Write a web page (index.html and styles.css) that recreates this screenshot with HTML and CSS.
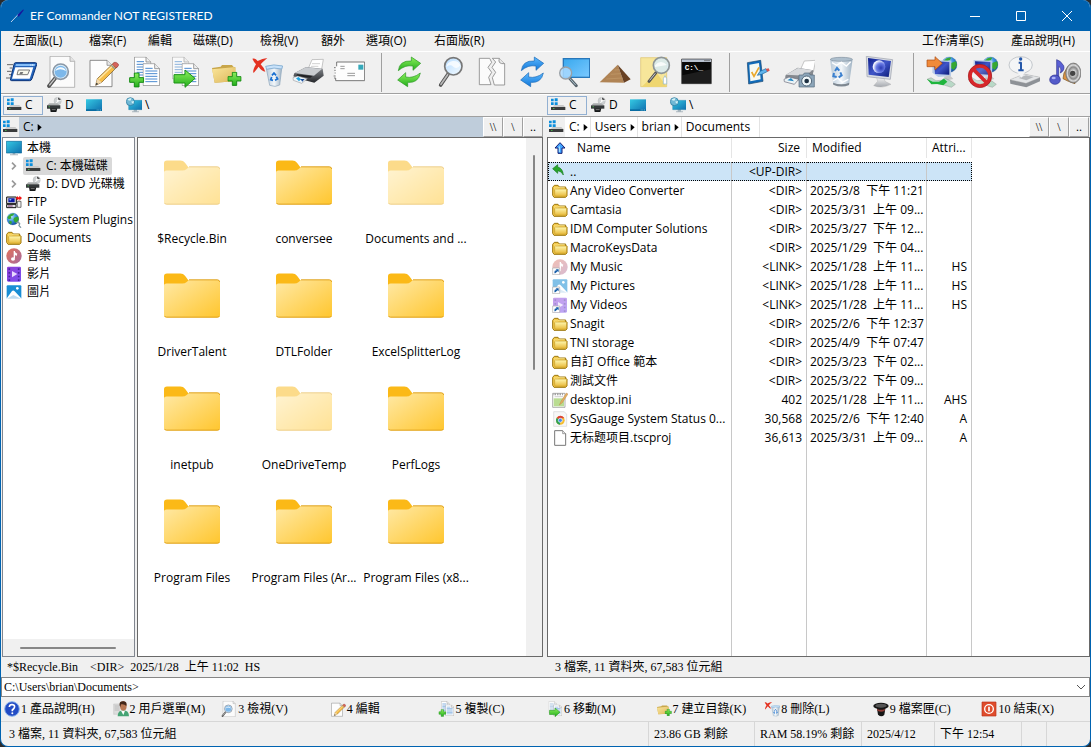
FILE: index.html
```html
<!DOCTYPE html>
<html lang="zh-Hant">
<head>
<meta charset="utf-8">
<title>EF Commander NOT REGISTERED</title>
<link rel="stylesheet" href="styles.css">
</head>
<body>
<svg class="sprite" aria-hidden="true">
<defs>
<linearGradient id="gFolder" x1="0" y1="0" x2="1" y2="1"><stop offset="0" stop-color="#ffe9a6"/><stop offset="1" stop-color="#ffc62e"/></linearGradient>
<linearGradient id="gGold" x1="0" y1="0" x2="0" y2="1"><stop offset="0" stop-color="#fff8b0"/><stop offset="1" stop-color="#e8b93a"/></linearGradient>
<linearGradient id="gPaleFolder" x1="0" y1="0" x2="1" y2="1"><stop offset="0" stop-color="#fbe69a"/><stop offset="1" stop-color="#dcb65c"/></linearGradient>
<linearGradient id="gScreen" x1="0" y1="0" x2="1" y2="1"><stop offset="0" stop-color="#35c9e3"/><stop offset="1" stop-color="#0f6fae"/></linearGradient>
<linearGradient id="gBlue" x1="0" y1="0" x2="1" y2="1"><stop offset="0" stop-color="#3aa9ee"/><stop offset="1" stop-color="#79c8ff"/></linearGradient>
<linearGradient id="gNavy" x1="0" y1="0" x2="1" y2="1"><stop offset="0" stop-color="#10208c"/><stop offset=".5" stop-color="#3f55c8"/><stop offset="1" stop-color="#0c1a78"/></linearGradient>
<linearGradient id="gGreen" x1="0" y1="0" x2="0" y2="1"><stop offset="0" stop-color="#8df05c"/><stop offset="1" stop-color="#22ad1c"/></linearGradient>
<linearGradient id="gArrowBlue" x1="0" y1="0" x2="0" y2="1"><stop offset="0" stop-color="#5ab8ff"/><stop offset="1" stop-color="#1377d8"/></linearGradient>
<linearGradient id="gSilver" x1="0" y1="0" x2="0" y2="1"><stop offset="0" stop-color="#fafafa"/><stop offset="1" stop-color="#a4a8ae"/></linearGradient>
<linearGradient id="gDark" x1="0" y1="0" x2="0" y2="1"><stop offset="0" stop-color="#8a8d92"/><stop offset="1" stop-color="#25272b"/></linearGradient>
<linearGradient id="gGlass" x1="0" y1="0" x2="1" y2="1"><stop offset="0" stop-color="#b7dcff"/><stop offset="1" stop-color="#f4fbff"/></linearGradient>
<linearGradient id="gBin" x1="0" y1="0" x2="1" y2="0"><stop offset="0" stop-color="#b9c9d8"/><stop offset=".5" stop-color="#f1f6fa"/><stop offset="1" stop-color="#9fb2c3"/></linearGradient>
<linearGradient id="gMusic" x1="0" y1="0" x2="1" y2="1"><stop offset="0" stop-color="#e2735a"/><stop offset="1" stop-color="#a86a9c"/></linearGradient>
<linearGradient id="gVideo" x1="0" y1="0" x2="1" y2="1"><stop offset="0" stop-color="#8f3fd6"/><stop offset="1" stop-color="#7a4ff0"/></linearGradient>
<radialGradient id="gGlobe" cx=".35" cy=".3" r=".8"><stop offset="0" stop-color="#c4ecff"/><stop offset=".5" stop-color="#3a8fdc"/><stop offset="1" stop-color="#0b3f92"/></radialGradient>
<radialGradient id="gMoon" cx=".65" cy=".6" r=".6"><stop offset="0" stop-color="#2a3bb4"/><stop offset=".6" stop-color="#6c7de6"/><stop offset="1" stop-color="#f4f6ff"/></radialGradient>
<radialGradient id="gCone"><stop offset="0" stop-color="#555"/><stop offset=".25" stop-color="#d8d8d8"/><stop offset=".6" stop-color="#888"/><stop offset=".8" stop-color="#ddd"/><stop offset="1" stop-color="#777"/></radialGradient>
</defs>

<symbol id="textpage" viewBox="0 0 52 68"><path d="M1 1H36L51 16V67H1Z" fill="#fff" stroke="#8a8a8a" stroke-width="2.5"/><path d="M36 1V16H51" fill="#eee" stroke="#8a8a8a" stroke-width="2.5"/><path d="M8 15H30M8 23H44M8 31H44M8 39H44M8 47H44M8 55H44" stroke="#4a8ad0" stroke-width="3"/></symbol>
<symbol id="plus" viewBox="0 0 46 46"><path d="M16 2H30V16H44V30H30V44H16V30H2V16H16Z" fill="url(#gGreen)" stroke="#158a14" stroke-width="3"/></symbol>
<symbol id="lens" viewBox="0 0 76 94"><path d="M30 54L8 86" stroke="#555" stroke-width="11" stroke-linecap="round"/><path d="M29 55L9 84" stroke="#b9b9b9" stroke-width="5" stroke-linecap="round"/><circle cx="46" cy="30" r="26" fill="url(#gGlass)" stroke="#777" stroke-width="5"/><path d="M25 33Q35 22 46 31T67 27A22 22 0 0 0 25 33Z" fill="#fff" opacity=".75"/></symbol>
<symbol id="globe" viewBox="0 0 50 50"><circle cx="25" cy="25" r="23" fill="url(#gGlobe)" stroke="#3069a0" stroke-width="1"/><path d="M8 13Q18 2 31 4L26 12L17 15L20 23L9 26L4 19ZM30 20L45 15L48 26L39 41L31 36L27 27ZM12 31L22 36L18 46L11 39Z" fill="#36a832"/></symbol>

<symbol id="run" viewBox="0 0 96 96"><path d="M6 26H24M14 36H22M6 46H20M12 56H18M3 66H16" stroke="#666" stroke-width="3"/><path d="M31 20H91Q97 20 95 26L81 68Q79 74 74 74H20Q14 74 17 67L27 25Q28 20 31 20Z" fill="#2564bb" stroke="#0b3479" stroke-width="3"/><path d="M33 24H91L89 30H31Z" fill="#85bdf7"/><path d="M31 34H85L74 68H21Z" fill="#fff"/><path d="M40 42H74L68 56H36Z" fill="#f8f8ec" stroke="#777" stroke-width="3"/><path d="M46 48H55L52 54H43Z" fill="#777"/><path d="M76 27H87" stroke="#fff" stroke-width="3" stroke-dasharray="3 2"/></symbol>
<symbol id="view" viewBox="0 0 96 96"><path d="M12 1H72L86 16V94H12Z" fill="#fbfbfb" stroke="#999" stroke-width="2"/><path d="M72 1V16H86" fill="#e4e4e4" stroke="#999" stroke-width="2"/><path d="M28 66L9 90" stroke="#555" stroke-width="11" stroke-linecap="round"/><path d="M27 67L10 88" stroke="#ccc" stroke-width="4"/><circle cx="44" cy="47" r="23" fill="#dceffc" stroke="#8b98a6" stroke-width="5"/><circle cx="44" cy="47" r="18" fill="#7db8ea"/><path d="M28 45Q42 34 60 45A17 17 0 0 0 28 45Z" fill="#f5fbff"/></symbol>
<symbol id="edit" viewBox="0 0 96 96"><path d="M9 13H60L75 28V92H9Z" fill="#fdfdfd" stroke="#777" stroke-width="2.5"/><path d="M60 13V28H75" fill="#e8e8e8" stroke="#777" stroke-width="2"/><path d="M26 88L31 68L80 21L91 32L44 79Z" fill="#f6bd48" stroke="#70501c" stroke-width="2"/><path d="M35 70L82 25" stroke="#ffe7a5" stroke-width="4"/><path d="M31 68L44 79L26 88Z" fill="#f1d8ac"/><path d="M28 80L34 84L26 88Z" fill="#333"/><path d="M76 25L82 19Q88 17 94 24Q96 29 92 32L87 36Z" fill="#d6635b" stroke="#833" stroke-width="1.5"/><path d="M73 28L84 39" stroke="#8f9498" stroke-width="4"/></symbol>
<symbol id="copy" viewBox="0 0 96 96"><use href="#textpage" x="18" y="2" width="52" height="68"/><use href="#textpage" x="44" y="22" width="52" height="68"/><use href="#plus" x="3" y="49" width="46" height="46"/></symbol>
<symbol id="move" viewBox="0 0 96 96"><g opacity=".6"><use href="#textpage" x="9" y="2" width="52" height="68"/></g><use href="#textpage" x="38" y="22" width="52" height="68"/><path d="M15 56H48V42L78 67L48 94V81H15Z" fill="url(#gGreen)" stroke="#1c9317" stroke-width="3"/></symbol>
<symbol id="mkdir" viewBox="0 0 96 96"><path d="M6 36L32 32L36 27L66 27L70 32L76 34V76L14 80Z" fill="#c8a64a"/><path d="M6 40L70 34L78 75L14 80Z" fill="url(#gPaleFolder)"/><path d="M68 34L76 34L78 75L72 78Z" fill="#e9cb75"/><use href="#plus" x="52" y="47" width="43" height="43"/></symbol>
<symbol id="delete" viewBox="0 0 96 96"><path d="M46 38L93 30L86 87Q74 95 56 88Z" fill="url(#gBin)" stroke="#8aa3ba" stroke-width="2"/><path d="M44 31Q68 23 95 30L92 39Q69 33 47 40Z" fill="#c8e2fa" stroke="#8db4d6" stroke-width="3"/><path d="M63 58L69 51L75 58M62 63L59 71L66 73M76 62L80 69L72 73" fill="none" stroke="#176ed0" stroke-width="5"/><path d="M4 8Q13 5 20 15Q34 8 49 6Q35 18 29 25Q39 35 43 47Q32 46 23 32Q16 41 8 51Q3 46 15 25Q8 17 4 8Z" fill="#e43222"/></symbol>
<symbol id="print" viewBox="0 0 96 96"><path d="M60 11L94 10L88 45L46 44Z" fill="#fff" stroke="#aaa" stroke-width="2"/><path d="M60 23H84M57 31H79" stroke="#bbb" stroke-width="2"/><path d="M7 52L42 33L92 38L95 59L67 80L22 68L4 61Z" fill="url(#gDark)"/><path d="M8 51L42 34L90 39L66 59Z" fill="#c9ccd0"/><path d="M15 55L61 60L55 65L13 61Z" fill="#202124"/><path d="M3 65L17 60L46 68L29 82L4 73Z" fill="#eef5fb" stroke="#888" stroke-width="1.5"/><path d="M12 67L20 63L27 70L21 76Z" fill="#22a5df"/><path d="M25 69L38 69L31 77Z" fill="#1b4f9e"/></symbol>
<symbol id="mail" viewBox="0 0 96 96"><path d="M11 18H95V74H8V66H3M8 60H2M8 51H5M8 43H4M8 35H3M11 18V31" fill="#fdfdfd" stroke="#777" stroke-width="3"/><path d="M76 26H91V41H76Z" fill="#36a9ba"/><path d="M22 31H35M22 38H35M43 52H66M43 59H66" stroke="#999" stroke-width="3"/></symbol>
<symbol id="cycle" viewBox="0 0 96 96"><path d="M13 44Q16 13 52 15V3L80 22L57 43V30Q33 26 13 44Z"/><path d="M79 51Q73 82 41 79V92L11 72L35 50V63Q57 68 79 51Z"/></symbol>
<symbol id="search" viewBox="0 0 96 96"><use href="#lens" x="9" y="1" width="76" height="94"/></symbol>
<symbol id="split" viewBox="0 0 96 96"><path d="M10 7H41L47 19L36 34L47 49L38 64L45 86H10Z" fill="#fbfbfb" stroke="#888" stroke-width="2.5"/><path d="M49 7H70L86 23V87H55L49 65L59 49L48 34L59 18Z" fill="#fbfbfb" stroke="#888" stroke-width="2.5"/><path d="M70 7Q64 25 86 23" fill="#e6e6e6" stroke="#888" stroke-width="2.5"/></symbol>
<symbol id="scan" viewBox="0 0 96 96"><path d="M14 6H97V66H14Z" fill="#2877ba"/><path d="M18 10H93V62H18Z" fill="url(#gBlue)"/><path d="M34 66L55 89" stroke="#58646c" stroke-width="9" stroke-linecap="round"/><path d="M35 67L53 87" stroke="#a7bdc8" stroke-width="3"/><circle cx="23" cy="51" r="18" fill="#a9d9ff" fill-opacity=".85" stroke="#999fa5" stroke-width="4"/></symbol>
<symbol id="pyramid" viewBox="0 0 96 96"><path d="M2 79L56 26L75 80Z" fill="#b08455"/><path d="M56 26L95 70L75 80Z" fill="#684124"/><path d="M22 69L70 66M35 55L65 53M47 42L61 41" stroke="#c39b6b" stroke-width="2"/></symbol>
<symbol id="findnote" viewBox="0 0 96 96"><path d="M2 5H80V92H2Z" fill="#f7e69a" stroke="#dcc36a" stroke-width="2"/><path d="M5 92L50 50L80 92Z" fill="#efd670"/><path d="M70 68L75 59L80 68V84H70Z" fill="#fff" stroke="#8bb5cf" stroke-width="2"/><path d="M48 50L27 76" stroke="#555" stroke-width="9" stroke-linecap="round"/><path d="M46 52L29 73" stroke="#ccc" stroke-width="3"/><circle cx="64" cy="28" r="24" fill="#d8eaf0" fill-opacity=".9" stroke="#8f9697" stroke-width="5"/><path d="M45 28Q62 8 81 27L45 33Z" fill="#fff" opacity=".8"/></symbol>
<symbol id="options" viewBox="0 0 96 96"><path d="M16 20L56 13L63 76L20 84Z" fill="#116bb9" stroke="#17466f" stroke-width="2"/><path d="M22 26L51 21L56 70L25 76Z" fill="#f6f9f3"/><path d="M29 48L36 61L51 34" fill="none" stroke="#e9a829" stroke-width="5"/><path d="M46 58L54 46L72 38L77 46L59 55Z" fill="#62b4ec" stroke="#17639b" stroke-width="2"/><path d="M71 39L80 37L83 44L76 47Z" fill="#d9534f"/></symbol>
<symbol id="camera" viewBox="0 0 96 96"><path d="M64 15L98 13L91 48L50 46Z" fill="#fff" stroke="#aaa" stroke-width="2"/><path d="M8 57L44 35L91 43L88 74H51L19 68L6 65Z" fill="#85898f"/><path d="M9 56L45 36L88 43L67 59Z" fill="#d7d9dc"/><path d="M3 70L18 63L47 70L34 85L4 77Z" fill="#edf4f6" stroke="#667" stroke-width="2"/><path d="M13 73L24 66L33 76Z" fill="#2689c5"/><path d="M48 57H60L64 51H78L82 57H94V93H48Z" fill="#8da6ba" stroke="#536779" stroke-width="2"/><circle cx="71" cy="75" r="15" fill="#eff7fa" stroke="#536779" stroke-width="3"/><circle cx="71" cy="75" r="7" fill="#1d3041"/></symbol>
<symbol id="bin" viewBox="0 0 96 96"><path d="M18 10L86 9L75 87Q52 97 28 86Z" fill="url(#gBin)"/><ellipse cx="52" cy="10" rx="33" ry="6" fill="#aebfcd" stroke="#7e909f" stroke-width="2"/><path d="M24 20L38 28L52 19L67 30L80 17M27 75L42 66L55 79L73 70" fill="none" stroke="#fff" stroke-width="4"/><path d="M33 45L39 36L46 44M30 51L28 61L38 63M49 49L53 58L44 64" fill="none" stroke="#3b80cf" stroke-width="6"/><path d="M28 86Q52 97 75 87L76 80Q52 89 27 80Z" fill="#7e8790"/></symbol>
<symbol id="screensaver" viewBox="0 0 96 96"><path d="M34 62H56L60 76L78 85Q52 99 26 89L38 76Z" fill="url(#gSilver)" stroke="#a8a8a8"/><path d="M4 1L83 11L76 70L6 62Z" fill="#d8dce3" stroke="#9a9fab" stroke-width="2"/><path d="M9 6L78 15L71 63L11 56Z" fill="url(#gNavy)"/><circle cx="42" cy="32" r="19" fill="url(#gMoon)"/></symbol>
<symbol id="netscreen" viewBox="0 0 96 96"><use href="#globe" x="45" y="1" width="50" height="50"/><path d="M20 12L76 14L75 60L37 63L19 50Z" fill="#b9cce8"/><path d="M24 16L70 18V56L27 54Z" fill="url(#gNavy)"/><path d="M53 62L71 58L82 69L65 73Z" fill="#c8c8c8"/><path d="M3 70L15 65L30 74L46 73L56 66L76 76L88 85L76 94L57 88L42 84L21 82Z" fill="#b9d9c7" stroke="#777" stroke-width="1"/></symbol>
<symbol id="connect" viewBox="0 0 96 96"><use href="#netscreen" width="96" height="96"/><path d="M3 69L20 77H39L54 68L64 77L52 88L34 84L16 85" fill="#1eb53d"/><path d="M3 12H27V2L49 22L27 42V32H3Z" fill="#f08a39" stroke="#a74813" stroke-width="2"/></symbol>
<symbol id="disconnect" viewBox="0 0 96 96"><use href="#netscreen" width="96" height="96"/><circle cx="39" cy="60" r="30" fill="#fff" fill-opacity=".15" stroke="#d7272a" stroke-width="11"/><path d="M18 39L60 81" stroke="#d7272a" stroke-width="11"/><circle cx="39" cy="60" r="35" fill="none" stroke="#8e1518" stroke-width="1.5"/></symbol>
<symbol id="driveinfo" viewBox="0 0 96 96"><path d="M6 72L48 54L97 64V75L55 94L7 83Z" fill="#8d9196"/><path d="M6 71L48 54L97 64L54 82Z" fill="#e4e6e8" stroke="#aaa"/><path d="M32 66L54 58L77 63L55 73Z" fill="#b5b8bb"/><ellipse cx="38" cy="27" rx="35" ry="25" fill="#f4f5f6" stroke="#aab0b6" stroke-width="2"/><path d="M27 48L41 65L51 48Z" fill="#f4f5f6"/><path d="M39 19V43M32 20H40M31 43H47" stroke="#2457a9" stroke-width="6"/><circle cx="38" cy="9" r="5" fill="#2457a9"/></symbol>
<symbol id="sound" viewBox="0 0 96 96"><path d="M45 51L56 33L78 22V83L58 76L42 68Z" fill="#dc9342" stroke="#76501c" stroke-width="2"/><ellipse cx="73" cy="51" rx="23" ry="30" fill="url(#gCone)" stroke="#777" stroke-width="2"/><circle cx="71" cy="52" r="8" fill="#444"/><path d="M23 11Q34 13 44 29Q48 43 34 51Q39 36 29 31V68H23Z" fill="#5a60d4" stroke="#2c318e" stroke-width="2"/><ellipse cx="18" cy="71" rx="16" ry="14" fill="#545bc9" stroke="#2d3294" stroke-width="2"/><ellipse cx="14" cy="66" rx="6" ry="4" fill="#aeb4f5"/></symbol>

<symbol id="s-drive" viewBox="0 0 48 48"><path d="M3 5H11V13H3ZM14 4H23V13H14ZM3 16H11V24H3ZM14 16H23V25H14Z" fill="#0c8fdd"/><path d="M8 29L14 24H40L46 30Z" fill="#c8c8c8"/><path d="M3 30H46V39H3Z" fill="#3a3c3d"/><path d="M10 33H13V36H10Z" fill="#53e45b"/></symbol>
<symbol id="s-dvd" viewBox="0 0 48 48"><circle cx="35" cy="12" r="11" fill="#ccd0d2" stroke="#aaa"/><path d="M35 1L36 10L46 9M35 14L28 21" stroke="#fff" stroke-width="3"/><circle cx="35" cy="12" r="3" fill="#fff"/><path d="M4 25L10 19H34L42 25Z" fill="#aaadae"/><path d="M3 25H43V35H3Z" fill="#34383a"/><path d="M12 34H34L31 45H14Z" fill="#161819"/><path d="M17 38H29" stroke="#aaa" stroke-width="2"/><path d="M8 28H11V31H8Z" fill="#4ed655"/></symbol>
<symbol id="s-desktop" viewBox="0 0 48 48"><path d="M0 7H48V42H0Z" fill="url(#gScreen)"/><path d="M0 37H48V42H0Z" fill="#086ca2"/><path d="M32 39H46" stroke="#9edff5" stroke-width="2" stroke-dasharray="3 2"/></symbol>
<symbol id="s-network" viewBox="0 0 48 48"><path d="M23 36H33V43H39V46H18V43H23Z" fill="#aab6be"/><path d="M8 10H48V38H8Z" fill="url(#gScreen)" stroke="#0c72a1"/><circle cx="13" cy="14" r="12" fill="#70b8d5" stroke="#1d7198" stroke-width="2"/><path d="M4 9Q8 2 17 4L13 11ZM15 14L24 12L22 21Z" fill="#d7f4f7"/></symbol>
<symbol id="s-computer" viewBox="0 0 48 48"><path d="M20 38H28V43H36V46H12V43H20Z" fill="#aeb9c0"/><path d="M1 4H47V39H1Z" fill="url(#gScreen)" stroke="#0b6898" stroke-width="2"/></symbol>
<symbol id="s-ftp" viewBox="0 0 48 48"><path d="M2 9H31V29H2Z" fill="#ddd" stroke="#111" stroke-width="3"/><path d="M7 13H26V25H7Z" fill="#0c18a8"/><path d="M10 15H17L12 21Z" fill="#7ec7ff"/><path d="M2 31H30V41H2Z" fill="#e0dfe2" stroke="#111" stroke-width="3"/><path d="M6 36H20" stroke="#7c3878" stroke-width="3"/><path d="M34 22H45V40H34Z" fill="#eee" stroke="#333" stroke-width="2"/><path d="M29 12L36 6V10H40V5L48 12L40 20V15H37V20Z" fill="#ef1515"/></symbol>
<symbol id="s-plugins" viewBox="0 0 48 48"><use href="#globe" x="1" y="1" width="39" height="40"/><path d="M31 34L36 30L41 35L39 41L45 47" fill="none" stroke="#8199a6" stroke-width="4"/></symbol>
<symbol id="s-folder" viewBox="0 0 48 48"><path d="M2 13L7 7H18L22 12H41V18H45V39L41 43H6L2 37Z" fill="#f3c94c" stroke="#9c770f" stroke-width="3"/><path d="M10 18H44L43 40H11Q8 40 8 35V20Z" fill="url(#gGold)" stroke="#c49822" stroke-width="2"/><path d="M6 15H17L21 14H38" fill="none" stroke="#fff1a3" stroke-width="2"/></symbol>
<symbol id="s-music" viewBox="0 0 48 48"><circle cx="24" cy="24" r="23" fill="url(#gMusic)"/><path d="M25 9V31" stroke="#fff" stroke-width="4"/><ellipse cx="21" cy="33" rx="6" ry="5" fill="#fff"/><path d="M25 9Q29 16 34 17L31 25L25 18Z" fill="#fff"/></symbol>
<symbol id="s-video" viewBox="0 0 48 48"><rect x="3" y="2" width="42" height="45" rx="4" fill="url(#gVideo)"/><path d="M10 7V45M38 7V45" stroke="#4a249d" stroke-width="5" stroke-dasharray="5 6"/><path d="M18 15L34 24L18 34Z" fill="#e8d9ff"/></symbol>
<symbol id="s-picture" viewBox="0 0 48 48"><rect x="2" y="4" width="44" height="41" rx="3" fill="#198ed5"/><path d="M3 42L18 21Q22 17 26 22L45 42V45H3Z" fill="#fff"/><path d="M3 44L22 33L45 44Z" fill="#bedcf0"/><circle cx="34" cy="13" r="4" fill="#fff"/></symbol>
<symbol id="shortcut" viewBox="0 0 48 48"><path d="M2 27H23V47H2Z" fill="#fff" stroke="#aaa" stroke-width="2"/><path d="M7 43L8 35L14 34L11 31H20V40L17 37L10 43Z" fill="#155da8"/></symbol>
<symbol id="s-ini" viewBox="0 0 48 48"><path d="M2 4H39V46H2Z" fill="#fdfdfd" stroke="#888" stroke-width="2"/><path d="M5 19H36V43H5Z" fill="#b9dc91"/><path d="M5 7H35" stroke="#777" stroke-width="5" stroke-dasharray="2 3"/><path d="M8 14H33" stroke="#bbb" stroke-width="2"/><path d="M22 39L27 28L43 3L48 6L31 32Z" fill="#e4b060" stroke="#ad7440"/></symbol>
<symbol id="s-chrome" viewBox="0 0 48 48"><path d="M5 2H36L44 9V46H5Z" fill="#f7f7f7" stroke="#d5d5d5" stroke-width="2"/><circle cx="25" cy="28" r="13" fill="#f5bd2e"/><path d="M25 28L14 21A13 13 0 0 1 37 22H25Z" fill="#dc4437"/><path d="M25 28L24 41A13 13 0 0 1 14 21Z" fill="#2da154"/><circle cx="25" cy="28" r="6" fill="#4285f4" stroke="#fff" stroke-width="2"/></symbol>
<symbol id="s-blank" viewBox="0 0 48 48"><path d="M8 2H32L41 11V46H8Z" fill="#fff" stroke="#777" stroke-width="3"/><path d="M32 2V11H41" fill="#eee" stroke="#777" stroke-width="2"/></symbol>
<symbol id="s-up" viewBox="0 0 48 48"><path d="M24 8L39 24H30V40H18V24H9Z" fill="#43a4ff" stroke="#111d72" stroke-width="3"/><path d="M22 19V36" stroke="#b9edff" stroke-width="3"/></symbol>
<symbol id="s-back" viewBox="0 0 48 48"><path d="M2 14L17 2V9Q32 12 34 33Q28 21 17 20V28Z" fill="#28a62a" stroke="#14791b" stroke-width="2"/></symbol>
<symbol id="s-help" viewBox="0 0 48 48"><circle cx="24" cy="24" r="22" fill="#234cc4" stroke="#8bb4ed" stroke-width="3"/><path d="M16 18Q17 10 25 11Q34 12 31 20Q29 24 25 27V31" fill="none" stroke="#fff" stroke-width="5"/><circle cx="25" cy="37" r="3" fill="#fff"/></symbol>
<symbol id="s-user" viewBox="0 0 48 48"><path d="M2 9H20V40H2Z" fill="#ddd" stroke="#aaa"/><path d="M5 15H18M5 21H18M5 27H18" stroke="#aaa" stroke-width="2"/><path d="M14 46Q14 28 31 28T48 46Z" fill="#45a474"/><path d="M24 29L31 42L36 29Z" fill="#fff"/><ellipse cx="31" cy="15" rx="10" ry="14" fill="#b97955"/><path d="M20 14Q17 0 32 1Q43 2 40 15Q34 8 24 10L22 18Z" fill="#432719"/></symbol>
<symbol id="s-hat" viewBox="0 0 48 48"><path d="M11 17H38L34 41Q26 50 15 41Z" fill="#161616"/><ellipse cx="24" cy="15" rx="23" ry="10" fill="#161616"/><ellipse cx="24" cy="14" rx="17" ry="6" fill="#555"/><path d="M12 23Q24 30 36 23L35 29Q25 35 13 29Z" fill="#8e3a34"/></symbol>
<symbol id="s-exit" viewBox="0 0 48 48"><path d="M3 3H45V45H3Z" fill="#df4c2c" stroke="#bb3219" stroke-width="2"/><circle cx="24" cy="24" r="13" fill="none" stroke="#fff" stroke-width="4"/><path d="M24 17V31" stroke="#fff" stroke-width="5"/></symbol>
<symbol id="s-pen" viewBox="0 0 48 48"><path d="M6 42L30 17" stroke="#bcd1ed" stroke-width="3"/><path d="M25 21L43 4L44 7L29 27Z" fill="#17169d"/></symbol>
<symbol id="s-arrow" viewBox="0 0 15 21"><path d="M2 0L14 10L2 21Z" fill="#000"/></symbol>
<symbol id="s-chevron" viewBox="0 0 24 36"><path d="M6 8L16 18L6 28" fill="none" stroke="#999" stroke-width="5"/></symbol>
<symbol id="s-bigfolder" viewBox="0 0 168 132"><path d="M0 38V8Q0 0 9 0H49Q58 0 63 7L73 20H160Q168 20 168 28V50H0Z" fill="#fbb917"/><path d="M0 37Q0 30 8 30H55Q63 30 67 26L76 19H160Q168 19 168 27V124Q168 132 160 132H8Q0 132 0 124Z" fill="url(#gFolder)"/><path d="M75 19H160Q166 19 167 25M1 127Q3 131 8 131H160Q165 131 167 127" fill="none" stroke="#dfa11d" stroke-width="3"/></symbol>
</svg>

<div class="window">
  <header class="titlebar">
    <svg class="icon16"><use href="#s-pen"/></svg>
    <h1>EF Commander NOT REGISTERED</h1>
    <div class="caption">
      <button type="button" aria-label="最小化"><svg viewBox="0 0 12 12"><path d="M1 6.500H11"/></svg></button>
      <button type="button" aria-label="最大化"><svg viewBox="0 0 12 12"><path d="M1.500 1.500H10.500V10.500H1.500Z"/></svg></button>
      <button type="button" aria-label="關閉"><svg viewBox="0 0 12 12"><path d="M1 1L11 11M11 1L1 11"/></svg></button>
    </div>
  </header>

  <nav class="menubar">
    <div class="menu-main">
      <button type="button">左面版(L)</button><button type="button">檔案(F)</button><button type="button">編輯</button><button type="button">磁碟(D)</button><button type="button">檢視(V)</button><button type="button">額外</button><button type="button">選項(O)</button><button type="button">右面版(R)</button>
    </div>
    <div class="menu-side"><button type="button">工作清單(S)</button><button type="button">產品說明(H)</button></div>
  </nav>

  <div class="toolbar" role="toolbar">
    <button type="button" aria-label="執行"><svg><use href="#run"/></svg></button>
    <button type="button" aria-label="檢視"><svg><use href="#view"/></svg></button>
    <button type="button" aria-label="編輯"><svg><use href="#edit"/></svg></button>
    <button type="button" aria-label="複製"><svg><use href="#copy"/></svg></button>
    <button type="button" aria-label="移動"><svg><use href="#move"/></svg></button>
    <button type="button" aria-label="建立目錄"><svg><use href="#mkdir"/></svg></button>
    <button type="button" aria-label="刪除"><svg><use href="#delete"/></svg></button>
    <button type="button" aria-label="列印"><svg><use href="#print"/></svg></button>
    <button type="button" aria-label="郵件"><svg><use href="#mail"/></svg></button>
    <span class="divider"></span>
    <button type="button" aria-label="重新整理"><svg class="cycle-green"><use href="#cycle"/></svg></button>
    <button type="button" aria-label="搜尋"><svg><use href="#search"/></svg></button>
    <button type="button" aria-label="分割"><svg><use href="#split"/></svg></button>
    <button type="button" aria-label="同步"><svg class="cycle-blue"><use href="#cycle"/></svg></button>
    <button type="button" aria-label="掃描"><svg><use href="#scan"/></svg></button>
    <button type="button" aria-label="樹狀"><svg><use href="#pyramid"/></svg></button>
    <button type="button" aria-label="尋找"><svg><use href="#findnote"/></svg></button>
    <button type="button" aria-label="命令列"><svg viewBox="0 0 96 96"><path d="M2 9H91V83H2Z" fill="#080808" stroke="#444" stroke-width="2"/><path d="M3 10H90V18H3Z" fill="#b8c1cf"/><path d="M70 14H87" stroke="#555" stroke-width="3" stroke-dasharray="4 2"/><path d="M3 58L90 40V82H3Z" fill="#1d1d1d"/><text x="11" y="43" fill="#fff" font-family="Liberation Mono, monospace" font-weight="700" font-size="23">C:\_</text></svg></button>
    <span class="divider"></span>
    <button type="button" aria-label="選項"><svg><use href="#options"/></svg></button>
    <button type="button" aria-label="擷取"><svg><use href="#camera"/></svg></button>
    <button type="button" aria-label="資源回收筒"><svg><use href="#bin"/></svg></button>
    <button type="button" aria-label="螢幕保護"><svg><use href="#screensaver"/></svg></button>
    <span class="divider"></span>
    <button type="button" aria-label="連線"><svg><use href="#connect"/></svg></button>
    <button type="button" aria-label="中斷連線"><svg><use href="#disconnect"/></svg></button>
    <button type="button" aria-label="磁碟資訊"><svg><use href="#driveinfo"/></svg></button>
    <button type="button" aria-label="音效"><svg><use href="#sound"/></svg></button>
  </div>

  <div class="drives">
    <div class="drive-set">
      <button type="button" class="active"><svg class="icon16"><use href="#s-drive"/></svg>C</button>
      <button type="button"><svg class="icon16"><use href="#s-dvd"/></svg>D</button>
      <button type="button" aria-label="桌面"><svg class="icon16"><use href="#s-desktop"/></svg></button>
      <button type="button"><svg class="icon16"><use href="#s-network"/></svg>\</button>
    </div>
    <div class="drive-set">
      <button type="button" class="active"><svg class="icon16"><use href="#s-drive"/></svg>C</button>
      <button type="button"><svg class="icon16"><use href="#s-dvd"/></svg>D</button>
      <button type="button" aria-label="桌面"><svg class="icon16"><use href="#s-desktop"/></svg></button>
      <button type="button"><svg class="icon16"><use href="#s-network"/></svg>\</button>
    </div>
  </div>

  <main class="panels">
    <section class="panel">
      <div class="path path-inactive">
        <span class="path-icon"><svg class="icon16"><use href="#s-drive"/></svg></span>
        <div class="crumbs"><button type="button">C:<svg><use href="#s-arrow"/></svg></button></div>
        <div class="path-keys"><button type="button">\\</button><button type="button">\</button><button type="button">..</button></div>
      </div>
      <div class="split">
        <div class="tree">
          <ul>
            <li><svg class="icon16"><use href="#s-computer"/></svg><span>本機</span></li>
            <li class="child"><svg class="chevron"><use href="#s-chevron"/></svg><span class="node selected"><svg class="icon16"><use href="#s-drive"/></svg><span>C: 本機磁碟</span></span></li>
            <li class="child"><svg class="chevron"><use href="#s-chevron"/></svg><span class="node"><svg class="icon16"><use href="#s-dvd"/></svg><span>D: DVD 光碟機</span></span></li>
            <li><svg class="icon16"><use href="#s-ftp"/></svg><span>FTP</span></li>
            <li><svg class="icon16"><use href="#s-plugins"/></svg><span>File System Plugins</span></li>
            <li><svg class="icon16"><use href="#s-folder"/></svg><span>Documents</span></li>
            <li><svg class="icon16"><use href="#s-music"/></svg><span>音樂</span></li>
            <li><svg class="icon16"><use href="#s-video"/></svg><span>影片</span></li>
            <li><svg class="icon16"><use href="#s-picture"/></svg><span>圖片</span></li>
          </ul>
          <div class="scroll-x"><span></span></div>
        </div>
        <div class="icons-pane">
          <ul class="icon-grid">
            <li><svg class="hidden-item"><use href="#s-bigfolder"/></svg><span>$Recycle.Bin</span></li>
            <li><svg><use href="#s-bigfolder"/></svg><span>conversee</span></li>
            <li><svg class="hidden-item"><use href="#s-bigfolder"/></svg><span>Documents and ...</span></li>
            <li><svg><use href="#s-bigfolder"/></svg><span>DriverTalent</span></li>
            <li><svg><use href="#s-bigfolder"/></svg><span>DTLFolder</span></li>
            <li><svg><use href="#s-bigfolder"/></svg><span>ExcelSplitterLog</span></li>
            <li><svg><use href="#s-bigfolder"/></svg><span>inetpub</span></li>
            <li><svg class="hidden-item"><use href="#s-bigfolder"/></svg><span>OneDriveTemp</span></li>
            <li><svg><use href="#s-bigfolder"/></svg><span>PerfLogs</span></li>
            <li><svg><use href="#s-bigfolder"/></svg><span>Program Files</span></li>
            <li><svg><use href="#s-bigfolder"/></svg><span>Program Files (Ar...</span></li>
            <li><svg><use href="#s-bigfolder"/></svg><span>Program Files (x8...</span></li>
          </ul>
          <div class="scroll-y"><span></span></div>
        </div>
      </div>
      <p class="info">*$Recycle.Bin &nbsp; &nbsp;&lt;DIR&gt;&nbsp; 2025/1/28&nbsp; 上午 11:02&nbsp; HS</p>
    </section>

    <section class="panel">
      <div class="path">
        <span class="path-icon"><svg class="icon16"><use href="#s-drive"/></svg></span>
        <div class="crumbs"><button type="button">C:<svg><use href="#s-arrow"/></svg></button><button type="button">Users<svg><use href="#s-arrow"/></svg></button><button type="button">brian<svg><use href="#s-arrow"/></svg></button><button type="button" class="last">Documents</button></div>
        <div class="path-keys"><button type="button">\\</button><button type="button">\</button><button type="button">..</button></div>
      </div>
      <div class="list">
        <table>
          <colgroup><col class="c-name"><col class="c-size"><col class="c-date"><col class="c-attr"></colgroup>
          <thead><tr><th><span><svg class="icon16"><use href="#s-up"/></svg>Name</span></th><th class="num"><span>Size</span></th><th><span>Modified</span></th><th><span>Attri...</span></th></tr></thead>
          <tbody>
            <tr class="current"><td><span><svg class="icon16"><use href="#s-back"/></svg>..</span></td><td>&lt;UP-DIR&gt;</td><td></td><td></td></tr>
            <tr><td><span><svg class="icon16"><use href="#s-folder"/></svg>Any Video Converter</span></td><td>&lt;DIR&gt;</td><td>2025/3/8&nbsp; 下午 11:21</td><td></td></tr>
            <tr><td><span><svg class="icon16"><use href="#s-folder"/></svg>Camtasia</span></td><td>&lt;DIR&gt;</td><td>2025/3/31&nbsp; 上午 09...</td><td></td></tr>
            <tr><td><span><svg class="icon16"><use href="#s-folder"/></svg>IDM Computer Solutions</span></td><td>&lt;DIR&gt;</td><td>2025/3/27&nbsp; 下午 12...</td><td></td></tr>
            <tr><td><span><svg class="icon16"><use href="#s-folder"/></svg>MacroKeysData</span></td><td>&lt;DIR&gt;</td><td>2025/1/29&nbsp; 下午 04...</td><td></td></tr>
            <tr><td><span><svg class="icon16"><use href="#s-music" opacity=".45"/><use href="#shortcut"/></svg>My Music</span></td><td>&lt;LINK&gt;</td><td>2025/1/28&nbsp; 上午 11...</td><td>HS</td></tr>
            <tr><td><span><svg class="icon16"><use href="#s-picture" opacity=".55"/><use href="#shortcut"/></svg>My Pictures</span></td><td>&lt;LINK&gt;</td><td>2025/1/28&nbsp; 上午 11...</td><td>HS</td></tr>
            <tr><td><span><svg class="icon16"><use href="#s-video" opacity=".5"/><use href="#shortcut"/></svg>My Videos</span></td><td>&lt;LINK&gt;</td><td>2025/1/28&nbsp; 上午 11...</td><td>HS</td></tr>
            <tr><td><span><svg class="icon16"><use href="#s-folder"/></svg>Snagit</span></td><td>&lt;DIR&gt;</td><td>2025/2/6&nbsp; 下午 12:37</td><td></td></tr>
            <tr><td><span><svg class="icon16"><use href="#s-folder"/></svg>TNI storage</span></td><td>&lt;DIR&gt;</td><td>2025/4/9&nbsp; 下午 07:47</td><td></td></tr>
            <tr><td><span><svg class="icon16"><use href="#s-folder"/></svg>自訂 Office 範本</span></td><td>&lt;DIR&gt;</td><td>2025/3/23&nbsp; 下午 02...</td><td></td></tr>
            <tr><td><span><svg class="icon16"><use href="#s-folder"/></svg>測試文件</span></td><td>&lt;DIR&gt;</td><td>2025/3/22&nbsp; 下午 09...</td><td></td></tr>
            <tr><td><span><svg class="icon16"><use href="#s-ini"/></svg>desktop.ini</span></td><td>402</td><td>2025/1/28&nbsp; 上午 11...</td><td>AHS</td></tr>
            <tr><td><span><svg class="icon16"><use href="#s-chrome"/></svg>SysGauge System Status 0...</span></td><td>30,568</td><td>2025/2/6&nbsp; 下午 12:40</td><td>A</td></tr>
            <tr><td><span lang="zh-Hans"><svg class="icon16"><use href="#s-blank"/></svg>无标题项目.tscproj</span></td><td>36,613</td><td>2025/3/31&nbsp; 上午 09...</td><td>A</td></tr>
            <tr class="filler"><td></td><td></td><td></td><td></td></tr>
          </tbody>
        </table>
      </div>
      <p class="info">3 檔案, 11 資料夾, 67,583 位元組</p>
    </section>
  </main>

  <div class="command">
    <input type="text" aria-label="命令列" value="C:\Users\brian\Documents&gt;">
    <button type="button" aria-label="歷程"><svg viewBox="0 0 12 12"><path d="M2 4L6 8L10 4"/></svg></button>
  </div>

  <div class="fnkeys">
    <button type="button"><svg class="icon16"><use href="#s-help"/></svg>1 產品說明(H)</button>
    <button type="button"><svg class="icon16"><use href="#s-user"/></svg>2 用戶選單(M)</button>
    <button type="button"><svg class="icon16"><use href="#view"/></svg>3 檢視(V)</button>
    <button type="button"><svg class="icon16"><use href="#edit"/></svg>4 編輯</button>
    <button type="button"><svg class="icon16"><use href="#copy"/></svg>5 複製(C)</button>
    <button type="button"><svg class="icon16"><use href="#move"/></svg>6 移動(M)</button>
    <button type="button"><svg class="icon16"><use href="#mkdir"/></svg>7 建立目錄(K)</button>
    <button type="button"><svg class="icon16"><use href="#delete"/></svg>8 刪除(L)</button>
    <button type="button"><svg class="icon16"><use href="#s-hat"/></svg>9 檔案匣(C)</button>
    <button type="button"><svg class="icon16"><use href="#s-exit"/></svg>10 結束(X)</button>
  </div>

  <footer class="status">
    <span>3 檔案, 11 資料夾, 67,583 位元組</span><span>23.86 GB 剩餘</span><span>RAM 58.19% 剩餘</span><span>2025/4/12</span><span>下午 12:54</span><span></span><span></span>
  </footer>
</div>
</body>
</html>
```

FILE: styles.css
```css
:root {
  --ui: "Open Sans", "Noto Sans CJK TC", sans-serif;
  --serif: "Liberation Serif", "Noto Sans CJK TC", serif;
  --accent: #0063b1;
  --face: #f0f0f0;
  --line: #a0a0a0;
}

* { box-sizing: border-box; }

body {
  margin: 0;
  background: #2b2b2b;
  color: #000;
  font: 12px/18px var(--ui);
}

ul, p, h1 { margin: 0; padding: 0; font: inherit; list-style: none; }

button {
  padding: 0;
  border: 0;
  background: none;
  color: inherit;
  font: inherit;
  white-space: nowrap;
}

svg { display: block; flex: none; }
.sprite { position: absolute; width: 0; height: 0; }
.icon16 { width: 16px; height: 16px; }

.window {
  display: flex;
  flex-direction: column;
  height: 100vh;
  border: 1px solid var(--accent);
  border-top: 0;
  border-radius: 8px;
  background: var(--face);
  overflow: hidden;
}

.titlebar {
  display: flex;
  align-items: center;
  gap: 5px;
  height: 31px;
  padding-left: 8px;
  background: var(--accent);
  color: #fff;
}
.titlebar h1 { font-family: Lato, sans-serif; }
.caption { display: flex; margin-left: auto; }
.caption button { display: grid; place-items: center; width: 46px; height: 31px; }
.caption svg { width: 12px; height: 12px; fill: none; stroke: #fff; stroke-width: 1; }

.menubar {
  display: flex;
  justify-content: space-between;
  height: 21px;
  padding: 0 13px 0 12px;
  border-bottom: 1px solid #fff;
}
.menu-main { display: grid; grid-template-columns: 76px 59px 45px 67px 61px 45px 68px auto; }
.menu-side { display: grid; grid-template-columns: 89px 66px; }
.menubar button { text-align: left; line-height: 20px; }

.toolbar {
  display: flex;
  height: 42px;
  border-bottom: 1px solid var(--line);
}
.toolbar button { display: grid; place-items: center; width: 41px; height: 41px; padding: 0 1px 1px 0; }
.toolbar svg { width: 32px; height: 32px; overflow: visible; }
.cycle-green { fill: url(#gGreen); stroke: #25951e; stroke-width: 2px; }
.cycle-blue { fill: url(#gArrowBlue); stroke: #1767b5; stroke-width: 2px; }
.divider { width: 20px; padding-left: 11px; }
.divider::before {
  content: "";
  display: block;
  height: 39px;
  margin-top: 1px;
  border-left: 1px solid var(--line);
}

.drives {
  display: grid;
  grid-template-columns: 1fr 1fr;
  gap: 3px;
  height: 23px;
  padding-top: 1px;
  border-top: 1px solid #fff;
  border-bottom: 1px solid var(--line);
}
.drive-set { display: flex; }
.drive-set:first-child { padding-left: 2px; }
.drive-set button {
  display: flex;
  align-items: center;
  gap: 3px;
  width: 40px;
  height: 19px;
  padding: 0 0 1px 3px;
}
.drive-set .active { border: 1px solid #92b0d2; padding-left: 2px; }

.panels {
  display: grid;
  grid-template-columns: 1fr 1fr;
  gap: 3px;
  flex: 1;
  min-height: 0;
}
.panel { display: flex; flex-direction: column; min-width: 0; min-height: 0; }

.path { display: flex; height: 20px; margin-right: 1px; background: #fff; }
.path-inactive { background: #bfcddb; }
.path-icon { width: 18px; padding: 2px 0 0 1px; background: var(--face); }
.crumbs { display: flex; flex: 1; }
.crumbs button {
  display: flex;
  align-items: center;
  gap: 3px;
  padding: 0 2px 0 4px;
  border-right: 1px solid #e3e3e3;
}
.path-inactive .crumbs button { border: 0; }
.crumbs .last { padding-right: 9px; }
.crumbs svg { width: 5px; height: 7px; }
.path-keys { display: flex; }
.path-keys button {
  width: 20px;
  border: 1px solid #fff;
  border-right-color: var(--line);
  border-bottom-color: var(--line);
  background: var(--face);
  font-family: var(--serif);
  line-height: 16px;
}

.split {
  display: grid;
  grid-template-columns: 133px 1fr;
  gap: 2px;
  flex: 1;
  min-height: 0;
  padding: 0 1px;
}

.tree {
  display: flex;
  flex-direction: column;
  justify-content: space-between;
  min-width: 0;
  border: 1px solid #828790;
  background: #fff;
  overflow: hidden;
}
.tree ul { padding-top: 1px; }
.tree li { display: flex; align-items: center; gap: 5px; height: 18px; padding-left: 3px; white-space: nowrap; }
.tree .child { padding-left: 7px; }
.chevron { width: 8px; height: 12px; }
.node { display: flex; align-items: center; gap: 5px; padding: 0 4px 0 2px; }
.selected { background: #d9d9d9; border-radius: 2px; }
.scroll-x { height: 17px; padding: 8px 18px 0 17px; background: var(--face); }
.scroll-x span { display: block; height: 2px; background: #868686; border-radius: 1px; }

.icons-pane {
  display: flex;
  justify-content: space-between;
  border: 1px solid #696969;
  background: #fff;
  overflow: hidden;
}
.icon-grid {
  display: grid;
  flex: 1;
  grid-template-columns: repeat(auto-fill, 108px);
  align-content: start;
  gap: 3px 4px;
}
.icon-grid li {
  display: flex;
  flex-direction: column;
  align-items: center;
  gap: 25px;
  padding-top: 22px;
  white-space: nowrap;
}
.icon-grid svg { width: 56px; height: 45px; }
.hidden-item { opacity: .5; }
.scroll-y { width: 16px; padding: 17px 6px 0 7px; background: var(--face); }
.scroll-y span { display: block; width: 2px; height: 215px; background: #868686; border-radius: 1px; }

.list { flex: 1; min-height: 0; border: 1px solid #696969; background: #fff; }
.list table { height: 100%; border-collapse: separate; border-spacing: 0; table-layout: fixed; width: 424px; }
.c-name { width: 184px; }
.c-size { width: 75px; }
.c-date { width: 120px; }
.c-attr { width: 45px; }
.list th { height: 24px; padding: 0 0 4px; font-weight: 400; text-align: left; vertical-align: top; }
.list th span { display: flex; align-items: center; gap: 9px; height: 20px; padding: 0 6px 0 5px; border-right: 1px solid #e5e5e5; }
.list th:first-child span { padding-left: 4px; }
.list th.num span { justify-content: flex-end; }
.list td {
  height: 19px;
  padding: 0 4px;
  border-right: 1px solid #c8c8c8;
  text-align: right;
  white-space: nowrap;
  overflow: hidden;
}
.list td:nth-child(3) { padding: 0 0 0 3px; text-align: left; }
.list td span { display: flex; align-items: center; gap: 2px; }
.list .current td { background: #cce4f7; border-top: 1px dotted #000; border-bottom: 1px dotted #000; line-height: 16px; }
.list .current td:first-child { padding-left: 3px; border-left: 1px dotted #000; }
.list .current td:last-child { border-right: 1px dotted #000; }
.list .filler td { height: auto; }

.info { height: 20px; padding-left: 6px; font-family: var(--serif); line-height: 20px; white-space: pre; }
.panel + .panel .info { padding-left: 8px; }

.command { display: flex; height: 20px; border: 1px solid #868686; background: #fff; }
.command input {
  flex: 1;
  min-width: 0;
  padding: 0 2px;
  border: 0;
  outline: 0;
  background: none;
  font: 12px/18px var(--serif);
}
.command button { display: grid; place-items: center; width: 16px; }
.command svg { width: 12px; height: 12px; fill: none; stroke: #555; }

.fnkeys { display: grid; grid-template-columns: repeat(10, 1fr); height: 24px; padding: 0 0 1px 3px; }
.fnkeys button { display: flex; align-items: center; gap: 1px; font-family: var(--serif); }

.status {
  display: grid;
  grid-template-columns: 1fr 106px 107px 73px 87px 25px 44px;
  height: 25px;
  border-top: 1px solid #d7d7d7;
  font-family: var(--serif);
  line-height: 24px;
  white-space: nowrap;
}
.status span { padding-left: 5px; border-left: 1px solid #d7d7d7; }
.status span:first-child { padding-left: 8px; border: 0; }
```
